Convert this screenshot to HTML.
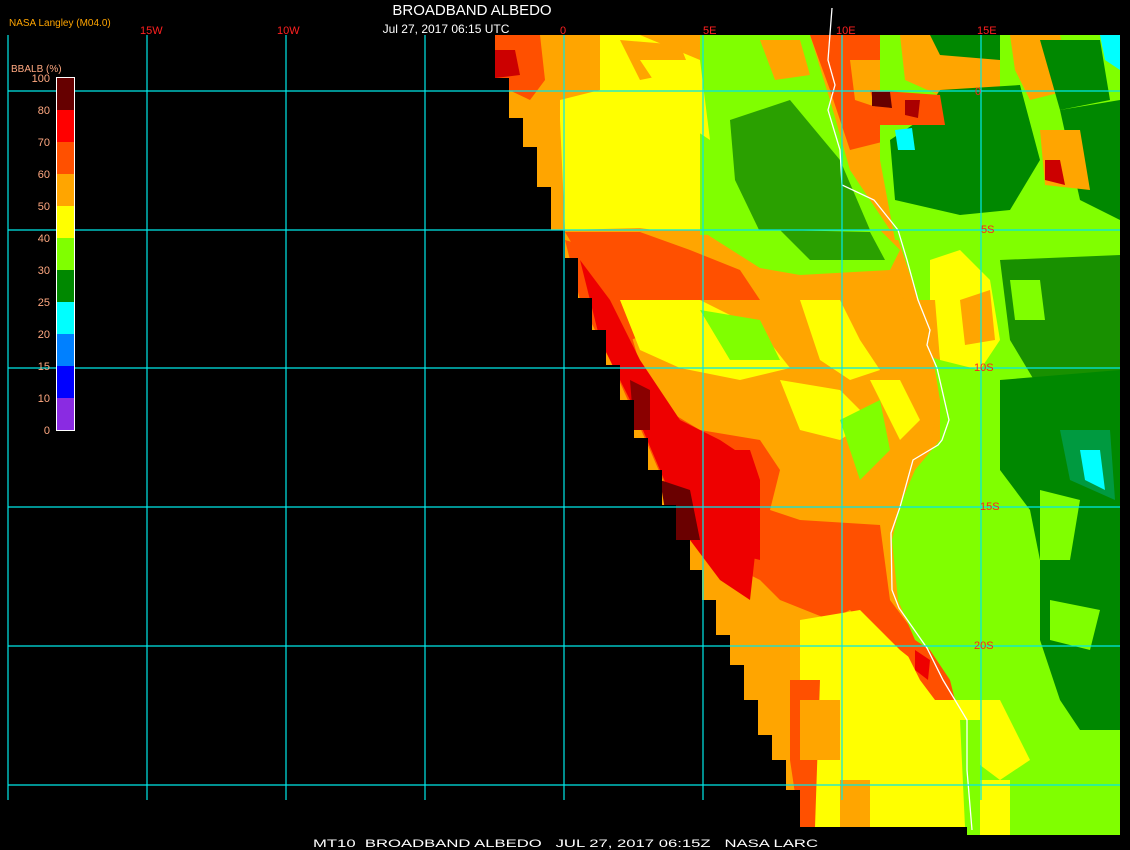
<!DOCTYPE html>
<html><head><meta charset="utf-8"><style>
html,body{margin:0;padding:0;background:#000;}
svg{display:block}
text{font-family:"Liberation Sans",sans-serif;}
</style></head><body>
<svg width="1130" height="850" viewBox="0 0 1130 850" xmlns="http://www.w3.org/2000/svg">
<rect width="1130" height="850" fill="#000"/>
<defs>
<clipPath id="d">
<polygon points="495,35 1120,35 1120,835 967,835 967,827 800,827 800,790 786,790 786,760 772,760 772,735 758,735 758,700 744,700 744,665 730,665 730,635 716,635 716,600 702,600 702,570 690,570 690,540 676,540 676,505 662,505 662,470 648,470 648,438 634,438 634,400 620,400 620,365 606,365 606,330 592,330 592,298 578,298 578,258 565,258 565,230 551,230 551,187 537,187 537,147 523,147 523,118 509,118 509,78 495,78"/>
</clipPath>
</defs>
<g clip-path="url(#d)">
<rect x="480" y="30" width="650" height="820" fill="#ffa500"/>
<!-- top left -->
<polygon points="495,35 540,35 545,80 530,100 509,90 495,78" fill="#ff5000"/>
<polygon points="495,50 515,50 520,75 495,78" fill="#cc0000"/>
<polygon points="560,35 640,35 700,60 700,230 565,230 560,120" fill="#ffff00"/>
<polygon points="560,35 600,35 600,90 560,100" fill="#ffa500"/>
<polygon points="620,40 680,45 690,70 640,80" fill="#ffa500"/>
<polygon points="700,35 810,35 830,100 850,170 890,230 700,235" fill="#80ff00"/>
<polygon points="640,60 700,60 710,140 680,120" fill="#ffff00"/>
<polygon points="730,120 790,100 840,160 870,230 760,232 735,180" fill="#2aa000"/>
<polygon points="760,40 800,40 810,75 775,80" fill="#ffa500"/>
<polygon points="810,35 880,35 900,80 890,140 850,150 830,90" fill="#ff5000"/>
<polygon points="850,60 880,60 885,110 855,100" fill="#ffa500"/>
<!-- top right -->
<polygon points="880,35 1120,35 1120,240 895,240 880,160" fill="#80ff00"/>
<polygon points="900,35 1000,35 1000,90 950,100 905,80" fill="#ffa500"/>
<polygon points="930,35 1000,35 1000,60 940,55" fill="#008800"/>
<polygon points="940,90 1020,85 1040,160 1010,210 960,215 895,200 890,140 920,120" fill="#008800"/>
<polygon points="1010,35 1060,35 1070,90 1030,100 1015,70" fill="#ffa500"/>
<polygon points="1040,40 1100,40 1110,100 1060,110" fill="#008800"/>
<polygon points="1060,110 1120,100 1120,220 1080,200" fill="#008800"/>
<polygon points="1040,130 1080,130 1090,190 1045,185" fill="#ffa500"/>
<polygon points="870,90 940,95 945,125 880,125" fill="#ff5000"/>
<polygon points="872,92 890,92 892,108 872,106" fill="#660000"/>
<polygon points="905,100 920,100 918,118 905,115" fill="#aa0000"/>
<polygon points="1045,160 1060,160 1065,185 1045,180" fill="#cc0000"/>
<polygon points="895,130 912,128 915,150 898,150" fill="#00ffff"/>
<polygon points="1100,35 1120,35 1120,70 1105,60" fill="#00ffff"/>
<!-- middle -->
<polygon points="565,230 640,228 720,240 790,270 880,270 905,300 920,360 935,420 925,480 900,520 890,600 920,650 960,720 960,827 565,827" fill="#ffa500"/>
<polygon points="565,232 640,232 690,250 740,270 760,300 700,300 660,330 630,340" fill="#ff5000"/>
<polygon points="565,240 600,250 630,330 650,400 700,430 760,440 780,470 770,510 800,520 880,525 890,600 920,640 960,700 940,705 900,660 850,610 830,620 780,600 760,580 720,560 680,520 650,450 610,360 580,300" fill="#ff5000"/>
<polygon points="580,260 610,300 640,360 680,420 720,440 750,460 760,510 750,600 720,580 690,540 660,470 630,400 600,340" fill="#ee0000"/>
<polygon points="690,450 750,450 760,480 760,560 720,550 700,500" fill="#ee0000"/>
<polygon points="660,480 690,490 700,540 676,540 665,510" fill="#6a0000"/>
<polygon points="630,380 650,390 650,430 634,430" fill="#8a0000"/>
<polygon points="620,300 700,300 760,330 790,368 740,380 680,368 640,350" fill="#ffff00"/>
<polygon points="700,310 760,320 780,360 730,360" fill="#80ff00"/>
<polygon points="800,300 840,300 860,340 880,370 850,380 820,360" fill="#ffff00"/>
<polygon points="700,230 880,230 900,250 890,270 800,275 760,268" fill="#80ff00"/>
<polygon points="780,230 870,232 885,260 810,260" fill="#2aa000"/>
<polygon points="780,380 840,390 870,420 840,440 800,430" fill="#ffff00"/>
<polygon points="870,380 900,380 920,420 900,440" fill="#ffff00"/>
<polygon points="840,420 880,400 890,450 860,480" fill="#80ff00"/>
<!-- east -->
<polygon points="895,230 1120,230 1120,835 967,835 965,720 945,680 915,640 898,600 892,540 900,505 915,470 940,440 940,400 930,340 915,290" fill="#80ff00"/>
<polygon points="930,260 960,250 990,280 1000,340 980,370 940,360 930,300" fill="#ffff00"/>
<polygon points="910,300 935,300 940,360 925,355" fill="#ffa500"/>
<polygon points="960,300 990,290 995,340 965,345" fill="#ffa500"/>
<polygon points="1000,260 1120,255 1120,440 1060,440 1040,390 1010,340" fill="#189000"/>
<polygon points="1010,280 1040,280 1045,320 1015,320" fill="#80ff00"/>
<polygon points="1000,380 1120,370 1120,730 1080,730 1060,700 1040,640 1040,560 1030,510 1000,470" fill="#008800"/>
<polygon points="1040,490 1080,500 1070,560 1040,560" fill="#80ff00"/>
<polygon points="1050,600 1100,610 1090,650 1050,640" fill="#80ff00"/>
<polygon points="1060,430 1110,430 1115,500 1070,480" fill="#009a40"/>
<polygon points="1080,450 1100,450 1105,490 1085,480" fill="#00ffff"/>
<polygon points="930,540 970,540 975,600 940,600" fill="#80ff00"/>
<!-- bottom -->
<polygon points="800,620 860,610 900,650 950,690 965,720 967,827 810,827 800,700" fill="#ffff00"/>
<polygon points="790,680 820,680 815,827 800,827 790,760" fill="#ff5000"/>
<polygon points="800,700 840,700 840,760 800,760" fill="#ffa500"/>
<polygon points="840,780 870,780 870,827 840,827" fill="#ffa500"/>
<polygon points="900,630 930,650 950,680 960,720 950,720 920,680 905,650" fill="#ff5000"/>
<polygon points="915,650 930,660 928,680 915,670" fill="#ee0000"/>
<polygon points="930,700 1000,700 1030,760 1000,780 960,750" fill="#ffff00"/>
<polygon points="980,780 1010,780 1010,835 980,835" fill="#ffff00"/>
<polygon points="960,720 980,720 980,827 965,827" fill="#80ff00"/>
</g>
<!-- coastline -->
<polyline points="832,8 828,60 835,85 828,110 840,150 842,185 874,200 898,230 907,260 918,300 930,330 927,345 937,368 949,420 942,440 938,445 913,460 900,507 891,533 892,590 899,608 927,648 943,680 967,720 967,770 972,830" fill="none" stroke="#fff" stroke-width="1.3"/>
<!-- grid -->
<g stroke="#00e8e8" stroke-width="1.2">
<line x1="8" y1="35" x2="8" y2="800"/>
<line x1="147" y1="35" x2="147" y2="800"/>
<line x1="286" y1="35" x2="286" y2="800"/>
<line x1="425" y1="35" x2="425" y2="800"/>
<line x1="564" y1="35" x2="564" y2="800"/>
<line x1="703" y1="35" x2="703" y2="800"/>
<line x1="842" y1="35" x2="842" y2="800"/>
<line x1="981" y1="35" x2="981" y2="800"/>
<line x1="8" y1="91" x2="1120" y2="91"/>
<line x1="8" y1="230" x2="1120" y2="230"/>
<line x1="8" y1="368" x2="1120" y2="368"/>
<line x1="8" y1="507" x2="1120" y2="507"/>
<line x1="8" y1="646" x2="1120" y2="646"/>
<line x1="8" y1="785" x2="1120" y2="785"/>
</g>
<!-- labels -->
<g fill="#ff2020" font-size="11">
<text x="140" y="34">15W</text>
<text x="277" y="34">10W</text>
<text x="560" y="34">0</text>
<text x="703" y="34">5E</text>
<text x="836" y="34">10E</text>
<text x="977" y="34">15E</text>
<text x="975" y="95">0</text>
<text x="981" y="233">5S</text>
<text x="974" y="371">10S</text>
<text x="980" y="510">15S</text>
<text x="974" y="649">20S</text>
</g>
<text x="472" y="15" fill="#fff" font-size="15" text-anchor="middle">BROADBAND ALBEDO</text>
<text x="446" y="33" fill="#fff" font-size="12" text-anchor="middle">Jul 27, 2017 06:15 UTC</text>
<text x="9" y="26" fill="#ffa500" font-size="10">NASA Langley (M04.0)</text>
<text x="11" y="72" fill="#ffa880" font-size="10">BBALB (%)</text>
<!-- legend -->
<rect x="57" y="77" width="17" height="33" fill="#660000"/>
<rect x="57" y="110" width="17" height="32" fill="#ff0000"/>
<rect x="57" y="142" width="17" height="32" fill="#ff5000"/>
<rect x="57" y="174" width="17" height="32" fill="#ffa500"/>
<rect x="57" y="206" width="17" height="32" fill="#ffff00"/>
<rect x="57" y="238" width="17" height="32" fill="#80ff00"/>
<rect x="57" y="270" width="17" height="32" fill="#008800"/>
<rect x="57" y="302" width="17" height="32" fill="#00ffff"/>
<rect x="57" y="334" width="17" height="32" fill="#0080ff"/>
<rect x="57" y="366" width="17" height="32" fill="#0000ff"/>
<rect x="57" y="398" width="17" height="32" fill="#8a2be2"/>
<rect x="56.5" y="77.5" width="18" height="353" fill="none" stroke="#fff" stroke-width="1"/>
<g fill="#ffa880" font-size="11" text-anchor="end">
<text x="50" y="82">100</text>
<text x="50" y="114">80</text>
<text x="50" y="146">70</text>
<text x="50" y="178">60</text>
<text x="50" y="210">50</text>
<text x="50" y="242">40</text>
<text x="50" y="274">30</text>
<text x="50" y="306">25</text>
<text x="50" y="338">20</text>
<text x="50" y="370">15</text>
<text x="50" y="402">10</text>
<text x="50" y="434">0</text>
</g>
<text x="313" y="847" fill="#fff" font-size="11" font-family="Liberation Mono, monospace" xml:space="preserve" textLength="505" lengthAdjust="spacingAndGlyphs">MT10  BROADBAND ALBEDO   JUL 27, 2017 06:15Z   NASA LARC</text>
</svg>
</body></html>
